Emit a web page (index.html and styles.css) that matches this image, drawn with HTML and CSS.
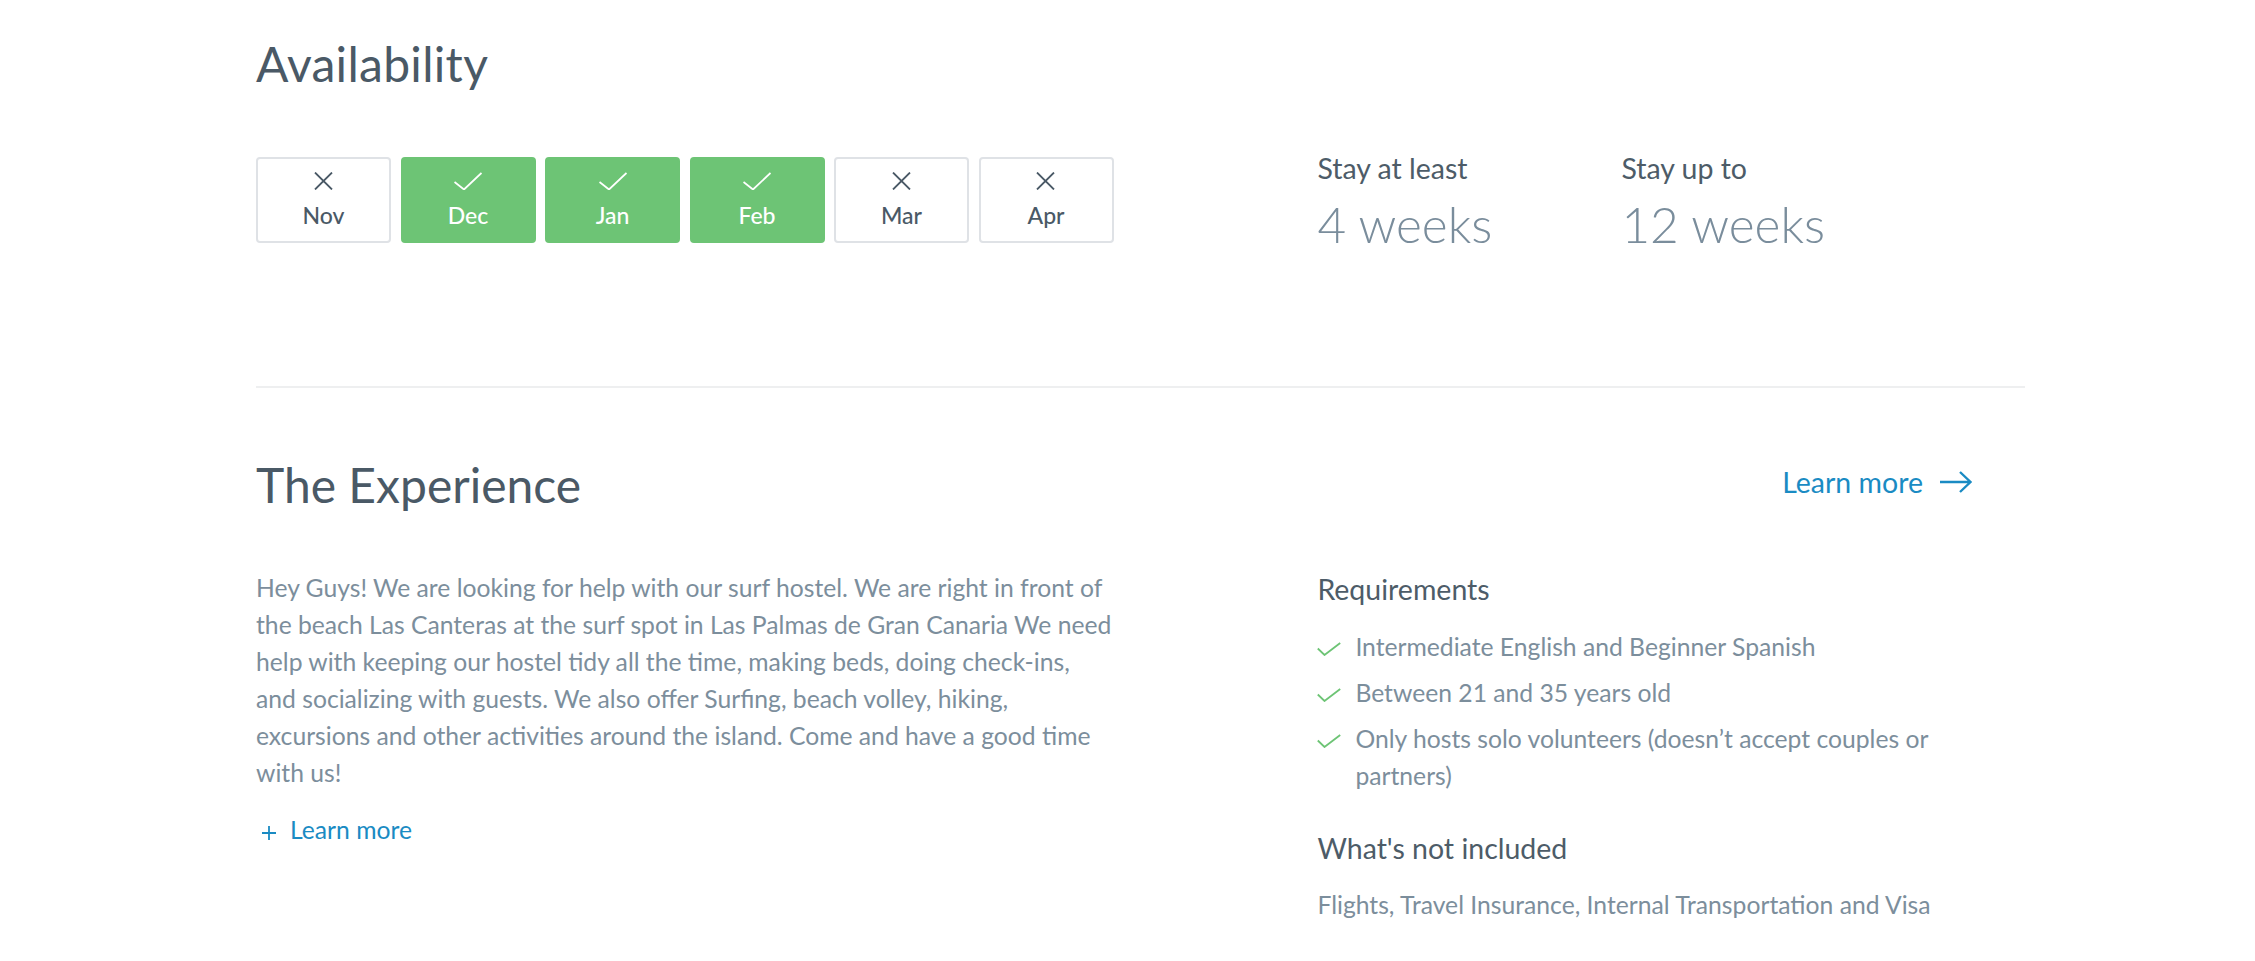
FILE: index.html
```html
<!DOCTYPE html>
<html lang="en">
<head>
    <meta charset="UTF-8">
    <meta name="viewport" content="width=device-width, initial-scale=1.0">
    <title>Surf Hostel - Las Palmas</title>
    <link rel="stylesheet" href="styles.css">
</head>
<body>
    <div class="page">
        <!-- Availability -->
        <section class="availability">
            <h2 class="section-title">Availability</h2>
            <div class="availability-body">
                <div class="months">
                    <div class="month">
                        <svg class="month-icon" viewBox="0 0 28 18"><path d="M5 0.5 L22 17.5 M22 0.5 L5 17.5"/></svg>
                        <span>Nov</span>
                    </div>
                    <div class="month open">
                        <svg class="month-icon" viewBox="0 0 28 18"><polyline points="0.5,10 10,17.5 27.5,1"/></svg>
                        <span>Dec</span>
                    </div>
                    <div class="month open">
                        <svg class="month-icon" viewBox="0 0 28 18"><polyline points="0.5,10 10,17.5 27.5,1"/></svg>
                        <span>Jan</span>
                    </div>
                    <div class="month open">
                        <svg class="month-icon" viewBox="0 0 28 18"><polyline points="0.5,10 10,17.5 27.5,1"/></svg>
                        <span>Feb</span>
                    </div>
                    <div class="month">
                        <svg class="month-icon" viewBox="0 0 28 18"><path d="M5 0.5 L22 17.5 M22 0.5 L5 17.5"/></svg>
                        <span>Mar</span>
                    </div>
                    <div class="month">
                        <svg class="month-icon" viewBox="0 0 28 18"><path d="M5 0.5 L22 17.5 M22 0.5 L5 17.5"/></svg>
                        <span>Apr</span>
                    </div>
                </div>
                <div class="stays">
                    <div class="stay">
                        <div class="stay-label">Stay at least</div>
                        <div class="stay-value">4 weeks</div>
                    </div>
                    <div class="stay">
                        <div class="stay-label">Stay up to</div>
                        <div class="stay-value">12 weeks</div>
                    </div>
                </div>
            </div>
        </section>

        <div class="divider"></div>

        <!-- The Experience -->
        <section class="experience">
            <div class="experience-head">
                <h2 class="section-title">The Experience</h2>
                <a class="more-link" href="#">Learn more
                    <svg class="arrow" viewBox="0 0 34 22"><path d="M1 11 H31 M21 1 L31.5 11 L21 21"/></svg>
                </a>
            </div>
            <div class="experience-body">
                <div class="about">
                    <p class="text">Hey Guys! We are looking for help with our surf hostel. We are right in front of the beach Las Canteras at the surf spot in Las Palmas de Gran Canaria We need help with keeping our hostel tidy all the time, making beds, doing check-ins, and socializing with guests. We also offer Surfing, beach volley, hiking, excursions and other activities around the island. Come and have a good time with us!</p>
                    <a class="expand-link" href="#"><svg class="plus" viewBox="0 0 14 14"><path d="M7 0 V14 M0 7 H14"/></svg>Learn more</a>
                </div>
                <div class="details">
                    <h3 class="detail-title">Requirements</h3>
                    <ul class="checklist">
                        <li><svg class="check" viewBox="0 0 24 14"><polyline points="0.8,6.5 7.5,13 23.2,1"/></svg><span>Intermediate English and Beginner Spanish</span></li>
                        <li><svg class="check" viewBox="0 0 24 14"><polyline points="0.8,6.5 7.5,13 23.2,1"/></svg><span>Between 21 and 35 years old</span></li>
                        <li><svg class="check" viewBox="0 0 24 14"><polyline points="0.8,6.5 7.5,13 23.2,1"/></svg><span>Only hosts solo volunteers (doesn’t accept couples or partners)</span></li>
                    </ul>
                    <h3 class="detail-title spaced">What's not included</h3>
                    <p class="text excluded">Flights, Travel Insurance, Internal Transportation and Visa</p>
                </div>
            </div>
        </section>
    </div>
</body>
</html>
```

FILE: styles.css
```css
body {
    margin: 0;
    font-family: "Lato", "Open Sans", sans-serif;
    color: #4a5966;
    background: #fff;
}

.page {
    margin-left: 256px;
    width: 1769px;
}

.section-title {
    margin: 0;
    font-size: 48px;
    line-height: 58px;
    font-weight: 400;
    color: #4a5966;
}

/* availability */
.availability {
    padding-top: 35px;
}

.availability .section-title {
    letter-spacing: 0.3px;
}

.availability-body {
    display: grid;
    grid-template-columns: 60% 40%;
    margin-top: 58px;
}

.months {
    display: flex;
    gap: 9.5px;
    margin-top: 6px;
}

.month {
    box-sizing: border-box;
    width: 135px;
    height: 86px;
    border: 2px solid #dfe2e6;
    border-radius: 4px;
    display: flex;
    flex-direction: column;
    align-items: center;
    padding-top: 12.5px;
    color: #4a5966;
    font-size: 23px;
    line-height: 28px;
    font-weight: 500;
}

.month span {
    margin-top: 11px;
}

.month-icon {
    width: 28px;
    height: 18px;
    fill: none;
    stroke: #4a5966;
    stroke-width: 1.8;
}

.month.open {
    background: #6dc475;
    border-color: #6dc475;
    color: #fff;
}

.month.open .month-icon {
    stroke: #fff;
}

.stays {
    display: flex;
}

.stay {
    width: 304px;
}

.stay-label {
    font-size: 28.5px;
    line-height: 34px;
    color: #4d5c68;
}

.stay-value {
    margin-top: 8.5px;
    font-size: 49.5px;
    line-height: 61px;
    font-weight: 300;
    color: #7a8d9c;
}

.divider {
    margin-top: 131px;
    height: 2px;
    background: #eeeff0;
}

/* experience */
.experience-head {
    display: flex;
    justify-content: space-between;
    align-items: center;
    margin-top: 68px;
    padding-right: 52px;
}

.more-link {
    display: flex;
    align-items: center;
    margin-bottom: 5px;
    font-size: 28.5px;
    line-height: 34px;
    color: #1a8bc3;
    text-decoration: none;
}

.arrow {
    width: 34px;
    height: 22px;
    margin-left: 16px;
    fill: none;
    stroke: #1a8bc3;
    stroke-width: 2.4;
}

.experience-body {
    display: grid;
    grid-template-columns: 60% 40%;
    margin-top: 55px;
}

.text {
    margin: 0;
    font-size: 24.7px;
    line-height: 37px;
    color: #7c8e9c;
}

.about .text {
    max-width: 857px;
}

.expand-link {
    display: inline-block;
    margin-top: 20px;
    font-size: 24.7px;
    line-height: 37px;
    color: #1a8bc3;
    text-decoration: none;
}

.plus {
    width: 14px;
    height: 14px;
    margin-left: 6px;
    margin-right: 14px;
    vertical-align: -1px;
    fill: none;
    stroke: #1a8bc3;
    stroke-width: 1.8;
}

.details {
    padding-top: 3px;
}

.detail-title {
    margin: 0;
    font-size: 28.5px;
    line-height: 34px;
    font-weight: 400;
    color: #4d5c68;
}

.detail-title.spaced {
    margin-top: 37px;
}

.checklist {
    list-style: none;
    margin: 22px 0 0;
    padding: 0;
}

.checklist li {
    display: flex;
    margin-bottom: 9px;
    font-size: 24.7px;
    line-height: 37px;
    color: #7c8e9c;
}

.checklist li:last-child {
    margin-bottom: 0;
}

.check {
    flex-shrink: 0;
    width: 24px;
    height: 14px;
    margin-top: 14px;
    margin-right: 14px;
    fill: none;
    stroke: #6dc475;
    stroke-width: 1.8;
}

.excluded {
    margin-top: 21px;
}
```
